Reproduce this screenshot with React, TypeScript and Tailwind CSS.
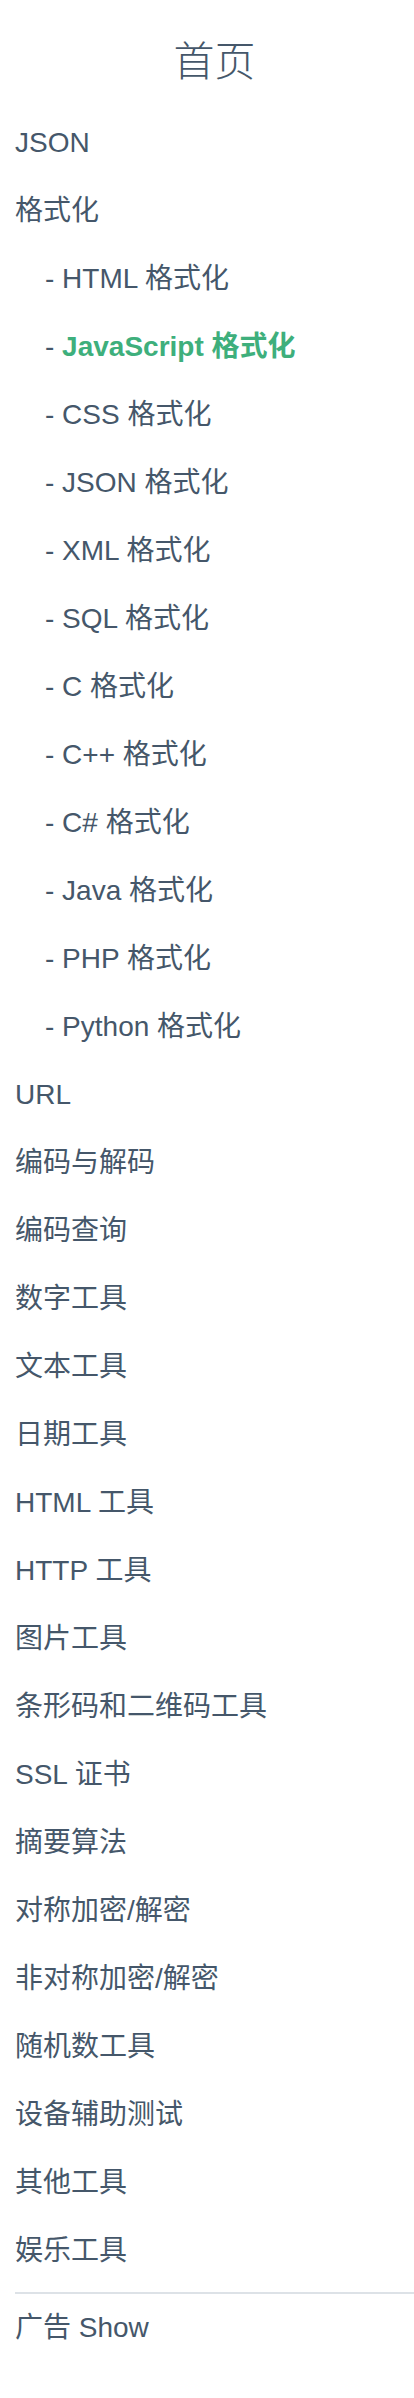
import React from "react";

type Item = { label: string; sub?: boolean; active?: boolean };

const items: Item[] = [
  { label: "JSON" },
  { label: "格式化" },
  { label: "HTML 格式化", sub: true },
  { label: "JavaScript 格式化", sub: true, active: true },
  { label: "CSS 格式化", sub: true },
  { label: "JSON 格式化", sub: true },
  { label: "XML 格式化", sub: true },
  { label: "SQL 格式化", sub: true },
  { label: "C 格式化", sub: true },
  { label: "C++ 格式化", sub: true },
  { label: "C# 格式化", sub: true },
  { label: "Java 格式化", sub: true },
  { label: "PHP 格式化", sub: true },
  { label: "Python 格式化", sub: true },
  { label: "URL" },
  { label: "编码与解码" },
  { label: "编码查询" },
  { label: "数字工具" },
  { label: "文本工具" },
  { label: "日期工具" },
  { label: "HTML 工具" },
  { label: "HTTP 工具" },
  { label: "图片工具" },
  { label: "条形码和二维码工具" },
  { label: "SSL 证书" },
  { label: "摘要算法" },
  { label: "对称加密/解密" },
  { label: "非对称加密/解密" },
  { label: "随机数工具" },
  { label: "设备辅助测试" },
  { label: "其他工具" },
  { label: "娱乐工具" },
];

export default function App() {
  return (
    <div
      className="min-h-[2398px] bg-white pl-[15px] text-[#45576a]"
      style={{ fontFamily: '"Liberation Sans", "Noto Sans CJK SC", sans-serif' }}
    >
      <div className="flex h-[109px] items-start justify-center pt-[38px]">
        <span className="text-[41px] font-light leading-[48px]">首页</span>
      </div>
      <ul>
        {items.map((it, i) => (
          <li key={i} className="flex h-[68px] items-center text-[28px]">
            {it.sub ? (
              <span className="ml-[30px]">
                -{" "}
                {it.active ? (
                  <span className="font-bold text-[#3eaf7c]">{it.label}</span>
                ) : (
                  it.label
                )}
              </span>
            ) : (
              <span>{it.label}</span>
            )}
          </li>
        ))}
      </ul>
      <div className="mt-[7px] border-t-2 border-[#dde2e7]" />
      <div className="flex h-[68px] items-center text-[28px]">广告 Show</div>
    </div>
  );
}
